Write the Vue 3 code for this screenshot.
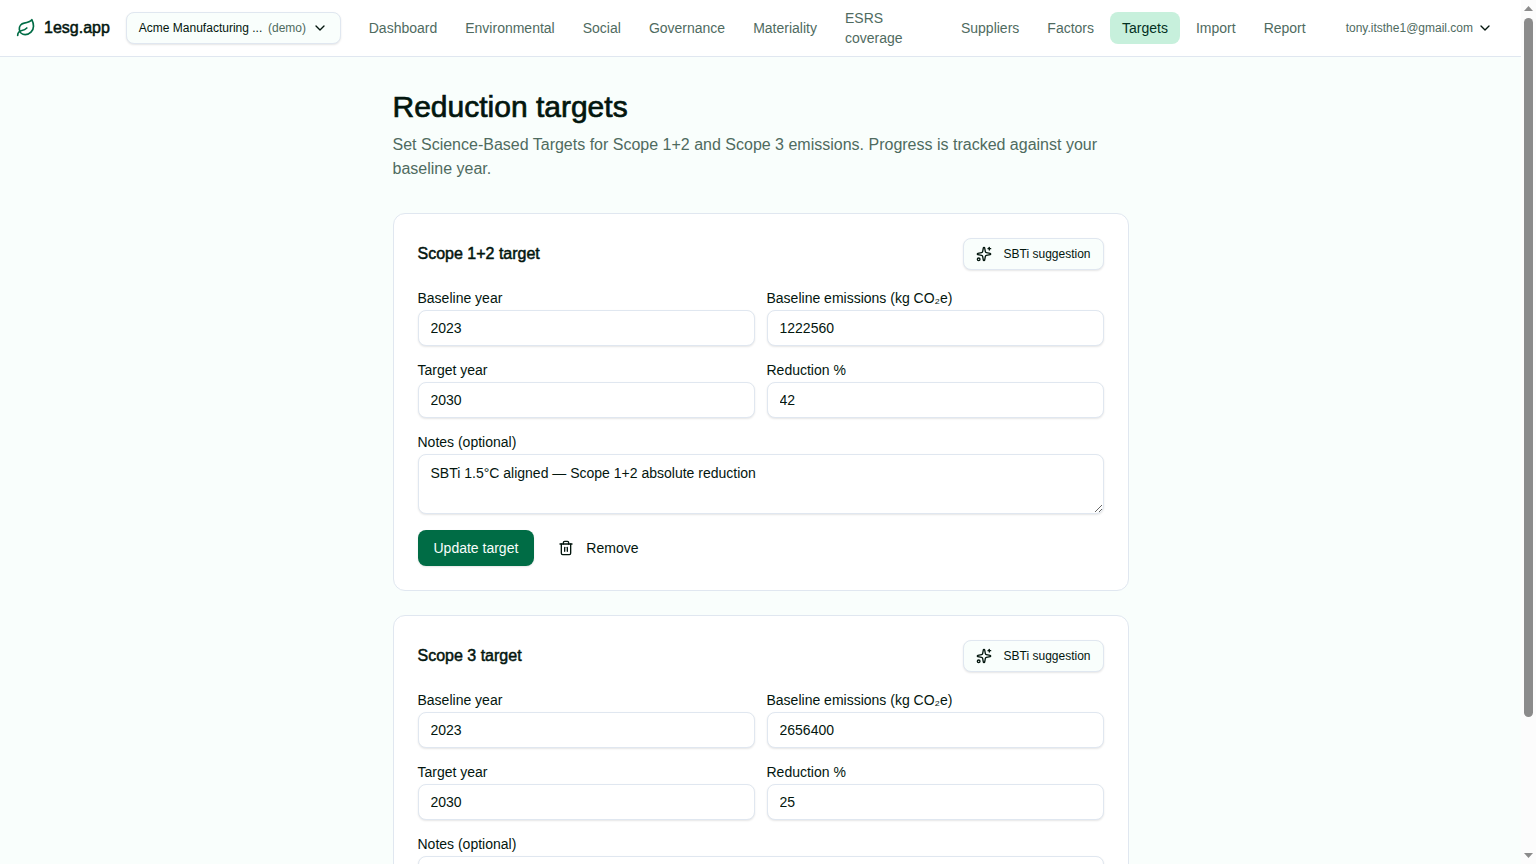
<template>
  <div class="shell">
    <div class="page">
      <header class="topbar">
        <a class="brand" href="#">
          <svg class="brand-icon" viewBox="0 0 24 24">
            <path d="M11 20A7 7 0 0 1 9.8 6.1C15.5 5 17 4.48 19 2c1 2 2 4.18 2 8 0 5.5-4.78 10-10 10Z" />
            <path d="M2 21c0-3 1.85-5.36 5.08-6C9.5 14.52 12 13 13 12" />
          </svg>
          <span class="strong">1esg.app</span>
        </a>

        <button class="outline-btn org-btn" type="button">
          <span>Acme Manufacturing ...</span>
          <span class="muted">(demo)</span>
          <svg class="icon" viewBox="0 0 24 24"><path d="m6 9 6 6 6-6" /></svg>
        </button>

        <nav class="nav">
          <a
            v-for="item in navItems"
            :key="item"
            href="#"
            class="nav-link"
            :class="{ active: item === 'Targets', wraps: item === 'ESRS coverage' }"
          >{{ item }}</a>
        </nav>

        <button class="user-btn" type="button">
          <span class="muted">tony.itsthe1@gmail.com</span>
          <svg class="icon" viewBox="0 0 24 24"><path d="m6 9 6 6 6-6" /></svg>
        </button>
      </header>

      <main class="content">
        <h1 class="title">Reduction targets</h1>
        <p class="subtitle">
          Set Science-Based Targets for Scope 1+2 and Scope 3 emissions. Progress is tracked against your
          baseline year.
        </p>

        <form v-for="target in targets" :key="target.id" class="card" @submit.prevent>
          <div class="card-head">
            <h2 class="card-title strong">{{ target.title }}</h2>
            <button class="outline-btn sbti-btn" type="button">
              <svg class="icon" viewBox="0 0 24 24">
                <path d="M11.017 2.814a1 1 0 0 1 1.966 0l1.051 5.558a2 2 0 0 0 1.594 1.594l5.558 1.051a1 1 0 0 1 0 1.966l-5.558 1.051a2 2 0 0 0-1.594 1.594l-1.051 5.558a1 1 0 0 1-1.966 0l-1.051-5.558a2 2 0 0 0-1.594-1.594l-5.558-1.051a1 1 0 0 1 0-1.966l5.558-1.051a2 2 0 0 0 1.594-1.594z" />
                <path d="M20 2v4" />
                <path d="M22 4h-4" />
                <circle cx="4" cy="20" r="2" />
              </svg>
              SBTi suggestion
            </button>
          </div>

          <div class="fields">
            <div v-for="field in fields" :key="field.key" class="field">
              <label :for="`${target.id}-${field.key}`">{{ field.label }}</label>
              <input :id="`${target.id}-${field.key}`" v-model="target[field.key]" type="text" inputmode="numeric" />
            </div>
          </div>

          <div class="field notes">
            <label :for="`${target.id}-notes`">Notes (optional)</label>
            <textarea :id="`${target.id}-notes`" v-model="target.notes" rows="2"></textarea>
          </div>

          <div class="actions">
            <button class="primary-btn" type="submit">Update target</button>
            <button class="ghost-btn" type="button">
              <svg class="icon" viewBox="0 0 24 24">
                <path d="M10 11v6" />
                <path d="M14 11v6" />
                <path d="M19 6v14a2 2 0 0 1-2 2H7a2 2 0 0 1-2-2V6" />
                <path d="M3 6h18" />
                <path d="M8 6V4a2 2 0 0 1 2-2h4a2 2 0 0 1 2 2v2" />
              </svg>
              Remove
            </button>
          </div>
        </form>
      </main>
    </div>

    <div class="scrollbar" aria-hidden="true">
      <svg class="arrow" viewBox="0 0 9 5"><path d="M0 5 4.5 0 9 5z" /></svg>
      <div class="track">
        <div class="thumb"></div>
      </div>
      <svg class="arrow" viewBox="0 0 9 5"><path d="M0 0 4.5 5 9 0z" /></svg>
    </div>
  </div>
</template>

<script setup>
import { ref } from 'vue'

const navItems = [
  'Dashboard',
  'Environmental',
  'Social',
  'Governance',
  'Materiality',
  'ESRS coverage',
  'Suppliers',
  'Factors',
  'Targets',
  'Import',
  'Report',
]

const fields = [
  { key: 'baselineYear', label: 'Baseline year' },
  { key: 'baselineEmissions', label: 'Baseline emissions (kg CO₂e)' },
  { key: 'targetYear', label: 'Target year' },
  { key: 'reduction', label: 'Reduction %' },
]

const targets = ref([
  {
    id: 'scope12',
    title: 'Scope 1+2 target',
    baselineYear: '2023',
    baselineEmissions: '1222560',
    targetYear: '2030',
    reduction: '42',
    notes: 'SBTi 1.5°C aligned — Scope 1+2 absolute reduction',
  },
  {
    id: 'scope3',
    title: 'Scope 3 target',
    baselineYear: '2023',
    baselineEmissions: '2656400',
    targetYear: '2030',
    reduction: '25',
    notes: '',
  },
])
</script>

<style>
body {
  margin: 0;
  background: #f9fefc;
}
</style>

<style scoped>
.shell {
  display: grid;
  grid-template-columns: 1fr 15px;
  height: 100vh;
  color: #03160e;
  font-family: 'Liberation Sans', Arial, sans-serif;
  font-size: 16px;
  line-height: 24px;
}
.page {
  min-width: 0;
  overflow-y: auto;
  scrollbar-width: none;
  background: #f9fefc;
}
.shell * {
  box-sizing: border-box;
}
button,
input,
textarea {
  font-family: inherit;
  color: inherit;
  margin: 0;
}
a {
  color: inherit;
  text-decoration: none;
}
.icon {
  width: 16px;
  height: 16px;
  flex-shrink: 0;
  fill: none;
  stroke: currentColor;
  stroke-width: 2;
  stroke-linecap: round;
  stroke-linejoin: round;
}
.muted {
  color: #4f6b5f;
}
/* regular outlines, slightly thickened */
.strong {
  -webkit-text-stroke: 0.5px currentColor;
}

/* top bar */
.topbar {
  display: flex;
  align-items: center;
  gap: 16px;
  height: 57px;
  padding: 0 16px;
  background: #fff;
  border-bottom: 1px solid #e0e7f0;
}
.brand {
  display: flex;
  align-items: center;
  gap: 8px;
}
.brand-icon {
  width: 20px;
  height: 20px;
  fill: none;
  stroke: #006c45;
  stroke-width: 2;
  stroke-linecap: round;
  stroke-linejoin: round;
}
.outline-btn {
  display: flex;
  align-items: center;
  height: 32px;
  padding: 0 12px;
  font-size: 12px;
  line-height: 16px;
  background: #f9fefc;
  border: 1px solid #e0e7f0;
  border-radius: 8px;
  box-shadow: 0 1px 2px rgba(0, 0, 0, 0.1);
  white-space: nowrap;
}
.org-btn {
  gap: 4px;
  width: 216px;
  justify-content: space-between;
}
.nav {
  display: flex;
  flex: 1;
  align-items: center;
  gap: 4px;
}
.nav-link {
  padding: 6px 12px;
  border-radius: 8px;
  font-size: 14px;
  line-height: 20px;
  color: #4f6b5f;
  white-space: nowrap;
}
.nav-link.wraps {
  width: 112px;
  white-space: normal;
}
.nav-link.active {
  background: #c7f0dc;
  color: #03301f;
}
.user-btn {
  display: flex;
  align-items: center;
  gap: 4px;
  height: 32px;
  padding: 0 12px;
  font-size: 12px;
  background: none;
  border: 0;
}

/* content */
.content {
  max-width: 768px;
  margin: 0 auto;
  padding: 32px 16px;
}
.title {
  margin: 0 0 8px;
  font-size: 30px;
  line-height: 36px;
  font-weight: 400;
  -webkit-text-stroke: 0.7px currentColor;
}
.subtitle {
  margin: 0 0 32px;
  color: #4f6b5f;
}
.card {
  padding: 24px;
  background: #fff;
  border: 1px solid #e0e7f0;
  border-radius: 12px;
}
.card + .card {
  margin-top: 24px;
}
.card-head {
  display: flex;
  align-items: center;
  justify-content: space-between;
  margin-bottom: 16px;
}
.card-title {
  margin: 0;
  font-size: 16px;
  line-height: 24px;
  font-weight: 400;
}
.sbti-btn {
  gap: 12px;
}
.fields {
  display: grid;
  grid-template-columns: 1fr 1fr;
  gap: 12px;
}
.field {
  display: flex;
  flex-direction: column;
}
.field label {
  font-size: 14px;
  line-height: 24px;
}
.field input,
.field textarea {
  width: 100%;
  font-size: 14px;
  line-height: 20px;
  background: #fff;
  border: 1px solid #e0e7f0;
  border-radius: 8px;
  box-shadow: 0 1px 2px rgba(0, 0, 0, 0.1);
}
.field input {
  height: 36px;
  padding: 4px 12px;
}
.field textarea {
  height: 60px;
  padding: 8px 12px;
  resize: vertical;
}
.notes {
  margin-top: 12px;
}
.actions {
  display: flex;
  gap: 8px;
  margin-top: 16px;
}
.primary-btn,
.ghost-btn {
  display: flex;
  align-items: center;
  height: 36px;
  padding: 0 16px;
  font-size: 14px;
  line-height: 20px;
  border: 0;
  border-radius: 8px;
}
.primary-btn {
  background: #006c45;
  color: #f9fefc;
  box-shadow: 0 1px 2px rgba(0, 0, 0, 0.1);
}
.ghost-btn {
  gap: 12px;
  background: none;
}

/* page scrollbar */
.scrollbar {
  display: flex;
  flex-direction: column;
  align-items: center;
  gap: 7px;
  padding: 6px 0;
  background: #fcfcfc;
}
.arrow {
  width: 9px;
  height: 5px;
  flex-shrink: 0;
  fill: #8b8b8b;
}
.track {
  flex: 1;
  width: 9px;
}
.thumb {
  height: 84.4%;
  background: #8b8b8b;
  border-radius: 5px;
}
</style>
